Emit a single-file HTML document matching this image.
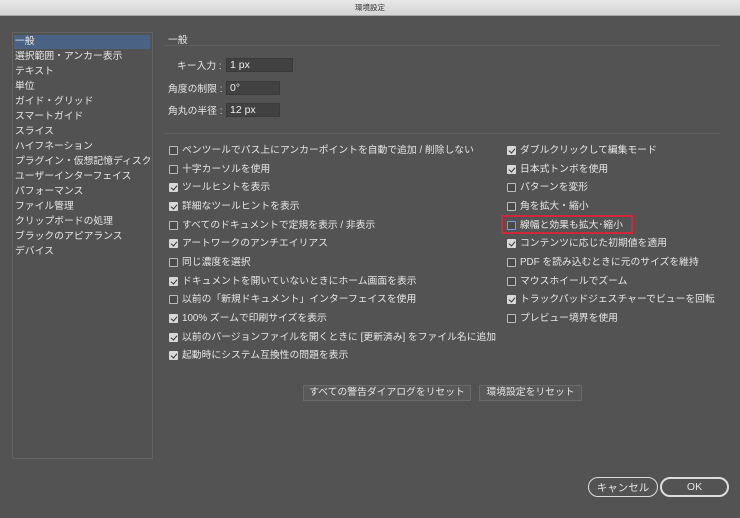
<!DOCTYPE html>
<html><head><meta charset="utf-8"><style>
*{margin:0;padding:0;box-sizing:border-box}
body{width:740px;height:518px;background:#535353;font-family:"Liberation Sans","Noto Sans CJK JP",sans-serif;color:#e6e6e6;font-size:9.8px;position:relative;overflow:hidden}
.title{position:absolute;left:0;top:0;width:740px;height:16px;background:linear-gradient(#e8e8e8,#d4d4d4);border-bottom:1px solid #a8a8a8;color:#333;font-size:7.5px;text-align:center;line-height:16px}
.side{position:absolute;left:12px;top:32px;width:141px;height:427px;border:1px solid #626262;background:#525252}
.side div{position:absolute;left:2px;height:14px;line-height:14px;white-space:nowrap;font-size:9.8px}
.side .sel{background:#4a6283;width:136px;left:1px;padding-left:1px}
.a{position:absolute;white-space:nowrap;line-height:13px}
.line{position:absolute;height:1px;background:#474747;border-bottom:1px solid #5e5e5e}
.inp{position:absolute;height:14px;background:#414141;border:1px solid #3a3a3a;color:#eee;padding-left:3px;line-height:12px;font-size:10.5px}
.cb{position:absolute;width:9px;height:9px;border:1px solid #bbb;border-radius:1px;background:#4a4a4a}
.cb.on{background:#d8d8d8;border-color:#d8d8d8}
.cb.on::after{content:"";position:absolute;left:2px;top:0px;width:3px;height:5px;border:solid #333;border-width:0 1.5px 1.5px 0;transform:rotate(40deg)}
.btn{position:absolute;height:16px;border:1px solid #6a6a6a;background:#595959;line-height:14px;text-align:center;white-space:nowrap}
.rb{position:absolute;height:20px;border:1.5px solid #ddd;border-radius:10px;display:flex;align-items:center;justify-content:center;white-space:nowrap;font-size:10.5px}
</style></head><body>
<div class="title">環境設定</div>
<div class="side">
<div class="sel" style="top:2px">一般</div>
<div style="top:17px">選択範囲・アンカー表示</div>
<div style="top:32px">テキスト</div>
<div style="top:47px">単位</div>
<div style="top:62px">ガイド・グリッド</div>
<div style="top:77px">スマートガイド</div>
<div style="top:92px">スライス</div>
<div style="top:107px">ハイフネーション</div>
<div style="top:122px">プラグイン・仮想記憶ディスク</div>
<div style="top:137px">ユーザーインターフェイス</div>
<div style="top:152px">パフォーマンス</div>
<div style="top:167px">ファイル管理</div>
<div style="top:182px">クリップボードの処理</div>
<div style="top:197px">ブラックのアピアランス</div>
<div style="top:212px">デバイス</div>
</div>
<div class="a" style="left:168px;top:34px">一般</div>
<div class="line" style="left:164px;top:45px;width:556px"></div>
<div class="a" style="left:177px;top:60px">キー入力 :</div>
<div class="inp" style="left:226px;top:58px;width:67px">1 px</div>
<div class="a" style="left:168px;top:83px">角度の制限 :</div>
<div class="inp" style="left:226px;top:81px;width:54px">0°</div>
<div class="a" style="left:168px;top:105px">角丸の半径 :</div>
<div class="inp" style="left:226px;top:103px;width:54px">12 px</div>
<div class="line" style="left:164px;top:133px;width:556px"></div>

<div class="cb" style="left:169px;top:146px"></div><div class="a" style="left:182px;top:144px">ペンツールでパス上にアンカーポイントを自動で追加 / 削除しない</div>
<div class="cb" style="left:169px;top:165px"></div><div class="a" style="left:182px;top:163px">十字カーソルを使用</div>
<div class="cb on" style="left:169px;top:183px"></div><div class="a" style="left:182px;top:181px">ツールヒントを表示</div>
<div class="cb on" style="left:169px;top:202px"></div><div class="a" style="left:182px;top:200px">詳細なツールヒントを表示</div>
<div class="cb" style="left:169px;top:221px"></div><div class="a" style="left:182px;top:219px">すべてのドキュメントで定規を表示 / 非表示</div>
<div class="cb on" style="left:169px;top:239px"></div><div class="a" style="left:182px;top:237px">アートワークのアンチエイリアス</div>
<div class="cb" style="left:169px;top:258px"></div><div class="a" style="left:182px;top:256px">同じ濃度を選択</div>
<div class="cb on" style="left:169px;top:277px"></div><div class="a" style="left:182px;top:275px">ドキュメントを開いていないときにホーム画面を表示</div>
<div class="cb" style="left:169px;top:295px"></div><div class="a" style="left:182px;top:293px">以前の「新規ドキュメント」インターフェイスを使用</div>
<div class="cb on" style="left:169px;top:314px"></div><div class="a" style="left:182px;top:312px">100% ズームで印刷サイズを表示</div>
<div class="cb on" style="left:169px;top:333px"></div><div class="a" style="left:182px;top:331px">以前のバージョンファイルを開くときに [更新済み] をファイル名に追加</div>
<div class="cb on" style="left:169px;top:351px"></div><div class="a" style="left:182px;top:349px">起動時にシステム互換性の問題を表示</div>

<div class="cb on" style="left:507px;top:146px"></div><div class="a" style="left:520px;top:144px">ダブルクリックして編集モード</div>
<div class="cb on" style="left:507px;top:165px"></div><div class="a" style="left:520px;top:163px">日本式トンボを使用</div>
<div class="cb" style="left:507px;top:183px"></div><div class="a" style="left:520px;top:181px">パターンを変形</div>
<div class="cb" style="left:507px;top:202px"></div><div class="a" style="left:520px;top:200px">角を拡大・縮小</div>
<div style="position:absolute;left:501px;top:215px;width:132px;height:19px;border:2px solid #d0283a"></div>
<div class="cb" style="left:507px;top:221px;border-color:#7aa0d8"></div><div class="a" style="left:520px;top:219px">線幅と効果も拡大･縮小</div>
<div class="cb on" style="left:507px;top:239px"></div><div class="a" style="left:520px;top:237px">コンテンツに応じた初期値を適用</div>
<div class="cb" style="left:507px;top:258px"></div><div class="a" style="left:520px;top:256px">PDF を読み込むときに元のサイズを維持</div>
<div class="cb" style="left:507px;top:277px"></div><div class="a" style="left:520px;top:275px">マウスホイールでズーム</div>
<div class="cb on" style="left:507px;top:295px"></div><div class="a" style="left:520px;top:293px">トラックパッドジェスチャーでビューを回転</div>
<div class="cb" style="left:507px;top:314px"></div><div class="a" style="left:520px;top:312px">プレビュー境界を使用</div>

<div class="btn" style="left:303px;top:385px;width:168px">すべての警告ダイアログをリセット</div>
<div class="btn" style="left:479px;top:385px;width:103px">環境設定をリセット</div>
<div class="rb" style="left:588px;top:477px;width:70px">キャンセル</div>
<div class="rb" style="left:660px;top:477px;width:69px;border-width:2px">OK</div>
</body></html>
